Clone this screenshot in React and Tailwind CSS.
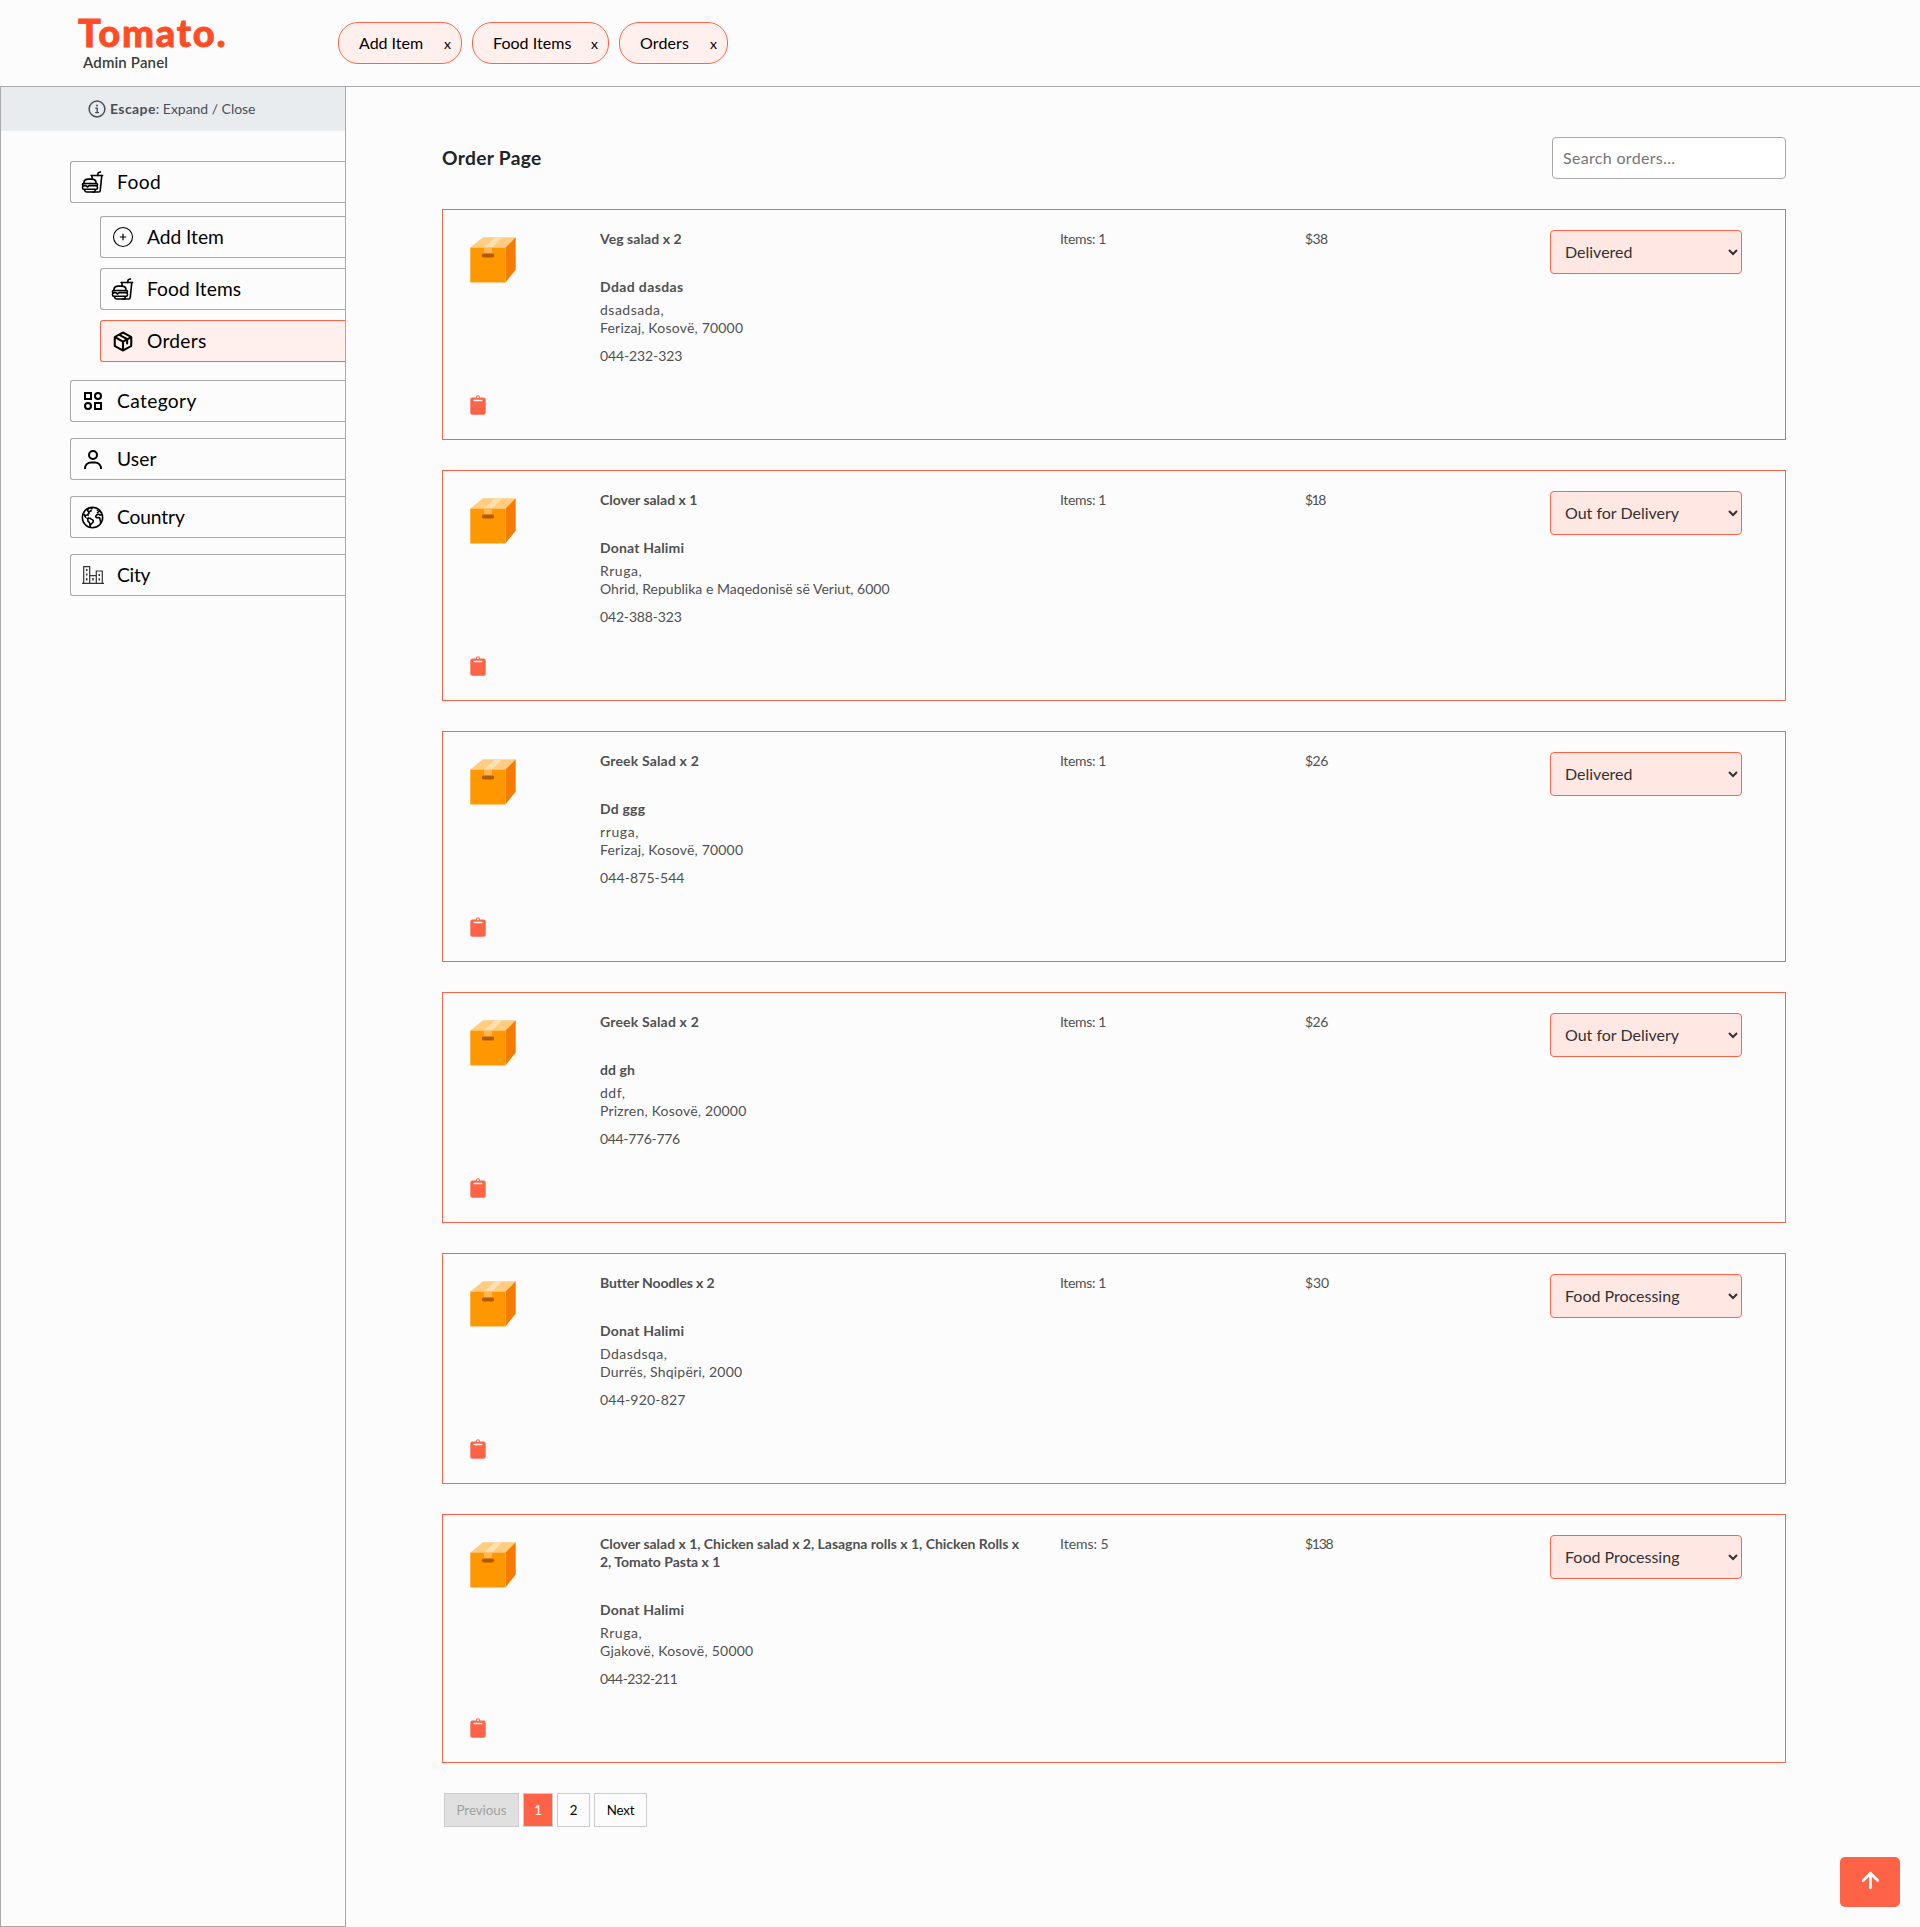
import React from "react";
import { IoEarthOutline, IoFastFoodOutline } from "react-icons/io5";
import { PiPackageBold } from "react-icons/pi";
import { LuArrowUp } from "react-icons/lu";

const tabs = [
  { label: "Add Item", width: "w-[124px]", track: "tracking-[-0.02px]" },
  { label: "Food Items", width: "w-[137px]", track: "tracking-[0.04px]" },
  { label: "Orders", width: "w-[109px]", track: "tracking-[0.13px]" },
];

const orders = [
  {
    items: "Veg salad x 2", itemsTrack: "tracking-[0.06px]",
    name: "Ddad dasdas", nameTrack: "tracking-[0.38px]",
    street: "dsadsada,", streetTrack: "tracking-[0.5px]",
    place: "Ferizaj, Kosovë, 70000", placeTrack: "tracking-[0.2px]",
    phone: "044-232-323", phoneTrack: "tracking-[-0.12px]",
    count: "Items: 1", countTrack: "tracking-[-0.35px]",
    price: "$38", priceTrack: "tracking-[-0.6px]",
    status: "Delivered",
  },
  {
    items: "Clover salad x 1", itemsTrack: "tracking-[-0.02px]",
    name: "Donat Halimi", nameTrack: "tracking-[0.17px]",
    street: "Rruga,", streetTrack: "tracking-[0.55px]",
    place: "Ohrid, Republika e Maqedonisë së Veriut, 6000", placeTrack: "tracking-[0.03px]",
    phone: "042-388-323", phoneTrack: "tracking-[-0.17px]",
    count: "Items: 1", countTrack: "tracking-[-0.35px]",
    price: "$18", priceTrack: "tracking-[-1.5px]",
    status: "Out for Delivery",
  },
  {
    items: "Greek Salad x 2", itemsTrack: "tracking-[0.17px]",
    name: "Dd ggg", nameTrack: "tracking-[0.2px]",
    street: "rruga,", streetTrack: "tracking-[0.6px]",
    place: "Ferizaj, Kosovë, 70000", placeTrack: "tracking-[0.2px]",
    phone: "044-875-544", phoneTrack: "tracking-[0.1px]",
    count: "Items: 1", countTrack: "tracking-[-0.35px]",
    price: "$26", priceTrack: "tracking-[-0.5px]",
    status: "Delivered",
  },
  {
    items: "Greek Salad x 2", itemsTrack: "tracking-[0.17px]",
    name: "dd gh", nameTrack: "tracking-[0.1px]",
    street: "ddf,", streetTrack: "tracking-[0.5px]",
    place: "Prizren, Kosovë, 20000", placeTrack: "tracking-[0.2px]",
    phone: "044-776-776", phoneTrack: "tracking-[-0.33px]",
    count: "Items: 1", countTrack: "tracking-[-0.35px]",
    price: "$26", priceTrack: "tracking-[-0.5px]",
    status: "Out for Delivery",
  },
  {
    items: "Butter Noodles x 2", itemsTrack: "tracking-[-0.15px]",
    name: "Donat Halimi", nameTrack: "tracking-[0.17px]",
    street: "Ddasdsqa,", streetTrack: "tracking-[0.45px]",
    place: "Durrës, Shqipëri, 2000", placeTrack: "tracking-[0.2px]",
    phone: "044-920-827", phoneTrack: "tracking-[0.2px]",
    count: "Items: 1", countTrack: "tracking-[-0.35px]",
    price: "$30", priceTrack: "tracking-[-0.12px]",
    status: "Food Processing",
  },
  {
    items: "Clover salad x 1, Chicken salad x 2, Lasagna rolls x 1, Chicken Rolls x 2, Tomato Pasta x 1", itemsTrack: "tracking-[-0.02px]",
    name: "Donat Halimi", nameTrack: "tracking-[0.17px]",
    street: "Rruga,", streetTrack: "tracking-[0.55px]",
    place: "Gjakovë, Kosovë, 50000", placeTrack: "tracking-[0.23px]",
    phone: "044-232-211", phoneTrack: "tracking-[-0.57px]",
    count: "Items: 5", countTrack: "tracking-[-0.02px]",
    price: "$138", priceTrack: "tracking-[-1.3px]",
    status: "Food Processing",
  },
];

function InfoIcon() {
  return (
    <svg viewBox="0 0 18 18" className="size-[18px]" fill="none" stroke="currentColor">
      <circle cx="9" cy="9" r="7.9" strokeWidth="1.5" />
      <path d="M7.4 8.2h1.8v4.2M7.2 12.6h3.8" strokeWidth="1.4" />
      <circle cx="9" cy="5.4" r="1" fill="currentColor" stroke="none" />
    </svg>
  );
}

function PlusCircle() {
  return (
    <svg viewBox="0 0 22 22" className="size-[22px]" fill="none" stroke="#000">
      <circle cx="11" cy="11" r="9.5" strokeWidth="1.1" />
      <path d="M11 7.8v6.4M7.8 11h6.4" strokeWidth="1.2" />
    </svg>
  );
}

function CategoryIcon() {
  return (
    <svg viewBox="0 0 18 18" className="size-[18px]" fill="none" stroke="#000" strokeWidth="2">
      <rect x="1" y="1" width="6" height="6" />
      <circle cx="14" cy="4" r="3" />
      <circle cx="4" cy="14" r="3" />
      <rect x="11" y="11" width="6" height="6" />
    </svg>
  );
}

function UserIcon() {
  return (
    <svg viewBox="0 0 18 19" className="h-[19px] w-[18px]" fill="none" stroke="#000" strokeWidth="2">
      <circle cx="9" cy="5" r="4" />
      <path d="M1 19v-.6a6 6 0 0 1 6-6h4a6 6 0 0 1 6 6v.6" />
    </svg>
  );
}

function CityIcon() {
  return (
    <svg viewBox="0 0 22 18" className="h-[18px] w-[22px]" fill="none" stroke="#333" strokeWidth="1.2">
      <path d="M0 17.3h22M1.7 17V.7h6V17M7.7 9.6h6.6M14.3 17V5h6v12" />
      <path d="M4.7 3v2M4.7 7.5v2M4.7 12v2.5M11 12v2.5M17.3 8v2M17.3 12.3v2.2" strokeWidth="1.5" />
    </svg>
  );
}

function BoxIcon() {
  return (
    <svg viewBox="0 0 46 46" className="size-[46px]">
      <path d="M0.3 10.5 13 0.3h32.7L35.5 10.5z" fill="#ffcc80" />
      <path d="M35.5 10.5 45.7 0.3v32.4L35.5 45.5z" fill="#f57c00" />
      <path d="M0.3 10.5h35.2v35H0.3z" fill="#ff9800" />
      <path d="M14 10.5 25 0.3h7.5L22 10.5z" fill="#ffe0b2" />
      <path d="M14 10.5h8v6.2h-8z" fill="#ffb74d" />
      <rect x="11.8" y="16.5" width="12.4" height="4" rx="2" fill="#b35900" />
    </svg>
  );
}

function ClipboardIcon() {
  return (
    <svg viewBox="0 0 16 20" className="h-5 w-4">
      <path d="M2.4 2.6h11.2A2.1 2.1 0 0 1 15.7 4.7v13a2.1 2.1 0 0 1-2.1 2.1H2.4A2.1 2.1 0 0 1 .3 17.7v-13A2.1 2.1 0 0 1 2.4 2.6z" fill="#ff6347" />
      <circle cx="8" cy="2.2" r="1.5" fill="#fcfcfc" stroke="#ff6347" strokeWidth="1.1" />
      <path d="M4.2 5.5h7.6" stroke="#fff" strokeWidth="1.4" strokeLinecap="round" />
    </svg>
  );
}

function MenuItem({ label, track, icon, sub, active, className }) {
  const tone = active ? "border-[#ff6347] bg-[#fff0ed]" : "border-[#a9a9a9]";
  const indent = sub ? "ml-[99px]" : "ml-[69px]";
  return (
    <div className={`flex h-[42px] items-center rounded-l-[3px] border border-r-0 pl-[10px] ${tone} ${indent} ${className}`}>
      <span className="flex w-[24px] shrink-0 items-center justify-center pr-px">{icon}</span>
      <span className={`ml-[12px] text-[19.2px] leading-6 text-black ${track}`}>{label}</span>
    </div>
  );
}

function OrderCard({ order }) {
  return (
    <div className="grid grid-cols-[107px_430px_215px_215px_1fr] gap-x-[30px] border border-[#ff6347] py-5 pl-5 text-sm leading-[18px] text-[#505050]">
      <div className="flex flex-col justify-between pt-[7px] pb-1 pl-[7px]">
        <BoxIcon />
        <ClipboardIcon />
      </div>
      <div className="min-h-[189px] pb-[54px]">
        <p className={`font-bold ${order.itemsTrack}`}>{order.items}</p>
        <p className={`mt-[30px] font-bold ${order.nameTrack}`}>{order.name}</p>
        <p className={`mt-[5px] ${order.streetTrack}`}>{order.street}</p>
        <p className={order.placeTrack}>{order.place}</p>
        <p className={`mt-2.5 ${order.phoneTrack}`}>{order.phone}</p>
      </div>
      <p className={order.countTrack}>{order.count}</p>
      <p className={order.priceTrack}>{order.price}</p>
      <div>
        <select
          defaultValue={order.status}
          className="h-11 w-48 rounded-[4px] border border-[#ff6347] bg-[#ffe8e4] pr-[2px] pb-[2px] pl-[10px] text-base text-[#323232]"
        >
          <option>Food Processing</option>
          <option>Out for Delivery</option>
          <option>Delivered</option>
        </select>
      </div>
    </div>
  );
}

export default function App() {
  return (
    <div className="flex h-[1927px] flex-col bg-[#fcfcfc] font-['Lato',sans-serif]">
      <header className="flex h-[87px] shrink-0 border-b border-[#a9a9a9]">
        <div className="w-[338px] pt-[10px] pl-[78px]">
          <p className="text-[38px] leading-[44px] font-black tracking-[1.8px] text-[#ff4c24] [-webkit-text-stroke:0.8px_#ff4c24]">Tomato.</p>
          <p className="-mt-[2px] pl-[5px] text-[15px] leading-[20px] font-semibold tracking-[0.15px] text-[#3c3c3c]">Admin Panel</p>
        </div>
        <div className="flex gap-2.5 pt-[22px]">
          {tabs.map((t) => (
            <div
              key={t.label}
              className={`flex h-[42px] items-center justify-between rounded-[20px] border border-[#ff6347] bg-[#fff0ed] pr-[10px] pl-5 text-base text-black ${t.width}`}
            >
              <span className={t.track}>{t.label}</span>
              <span className="text-[14px]">x</span>
            </div>
          ))}
        </div>
      </header>

      <div className="flex min-h-0 flex-1">
        <aside className="w-[346px] shrink-0 border border-t-0 border-[#a9a9a9]">
          <div className="flex h-11 items-center bg-[#e9ecef] pl-[87px] text-sm text-[#495057]">
            <InfoIcon />
            <span className="ml-1 font-bold tracking-[0.4px]">Escape</span>
            <span className="tracking-[-0.03px]">: Expand / Close</span>
          </div>
          <nav className="pt-[30px]">
            <MenuItem label="Food" track="tracking-[0.41px]" icon={<IoFastFoodOutline size={24} className="[&_path]:[stroke-width:36px]" />} />
            <MenuItem sub className="mt-[13px]" label="Add Item" track="tracking-[-0.03px]" icon={<PlusCircle />} />
            <MenuItem sub className="mt-2.5" label="Food Items" track="tracking-[0.05px]" icon={<IoFastFoodOutline size={24} className="[&_path]:[stroke-width:36px]" />} />
            <MenuItem sub active className="mt-2.5" label="Orders" track="tracking-[0.28px]" icon={<PiPackageBold size={23} className="ml-px" />} />
            <MenuItem className="mt-[18px]" label="Category" track="tracking-[0.37px]" icon={<CategoryIcon />} />
            <MenuItem className="mt-4" label="User" track="tracking-[0.14px]" icon={<UserIcon />} />
            <MenuItem className="mt-4" label="Country" track="tracking-[-0.11px]" icon={<IoEarthOutline size={25} className="shrink-0" />} />
            <MenuItem className="mt-4" label="City" track="tracking-[-0.27px]" icon={<CityIcon />} />
          </nav>
        </aside>

        <main className="w-[1440px] pt-[50px] pl-24">
          <div className="flex h-[42px] items-center justify-between">
            <h1 className="pt-px text-[19.2px] font-bold tracking-[0.34px] text-[#212529]">Order Page</h1>
            <input
              placeholder="Search orders..."
              className="h-[42px] w-[234px] rounded-[4px] border border-[#a9a9a9] bg-white px-2.5 pb-[2px] text-base tracking-[0.32px] placeholder:text-[#757575]"
            />
          </div>
          <div className="mt-[30px] flex flex-col gap-[30px]">
            {orders.map((o, i) => (
              <OrderCard key={i} order={o} />
            ))}
          </div>
          <div className="mt-[30px] ml-0.5 flex gap-1 text-[13.3px] text-black">
            <button disabled className="h-[34px] w-[75px] border border-[#ccc] bg-[#e0e0e0] pt-[2px] text-[#a0a0a0]">Previous</button>
            <button className="h-[34px] w-[30px] border border-[#ccc] bg-[#ff6347] pt-[2px] text-white">1</button>
            <button className="h-[34px] w-[33px] border border-[#ccc] bg-[#fcfcfc] pt-[2px]">2</button>
            <button className="h-[34px] w-[53px] border border-[#ccc] bg-[#fcfcfc] pt-[2px] tracking-[-0.17px]">Next</button>
          </div>
        </main>
      </div>

      <button className="fixed right-5 bottom-5 flex h-[50px] w-[60px] items-center justify-center rounded-[5px] bg-[#ff6347] text-white">
        <LuArrowUp size={25} strokeWidth={2.6} className="-mt-[3px]" />
      </button>
    </div>
  );
}
